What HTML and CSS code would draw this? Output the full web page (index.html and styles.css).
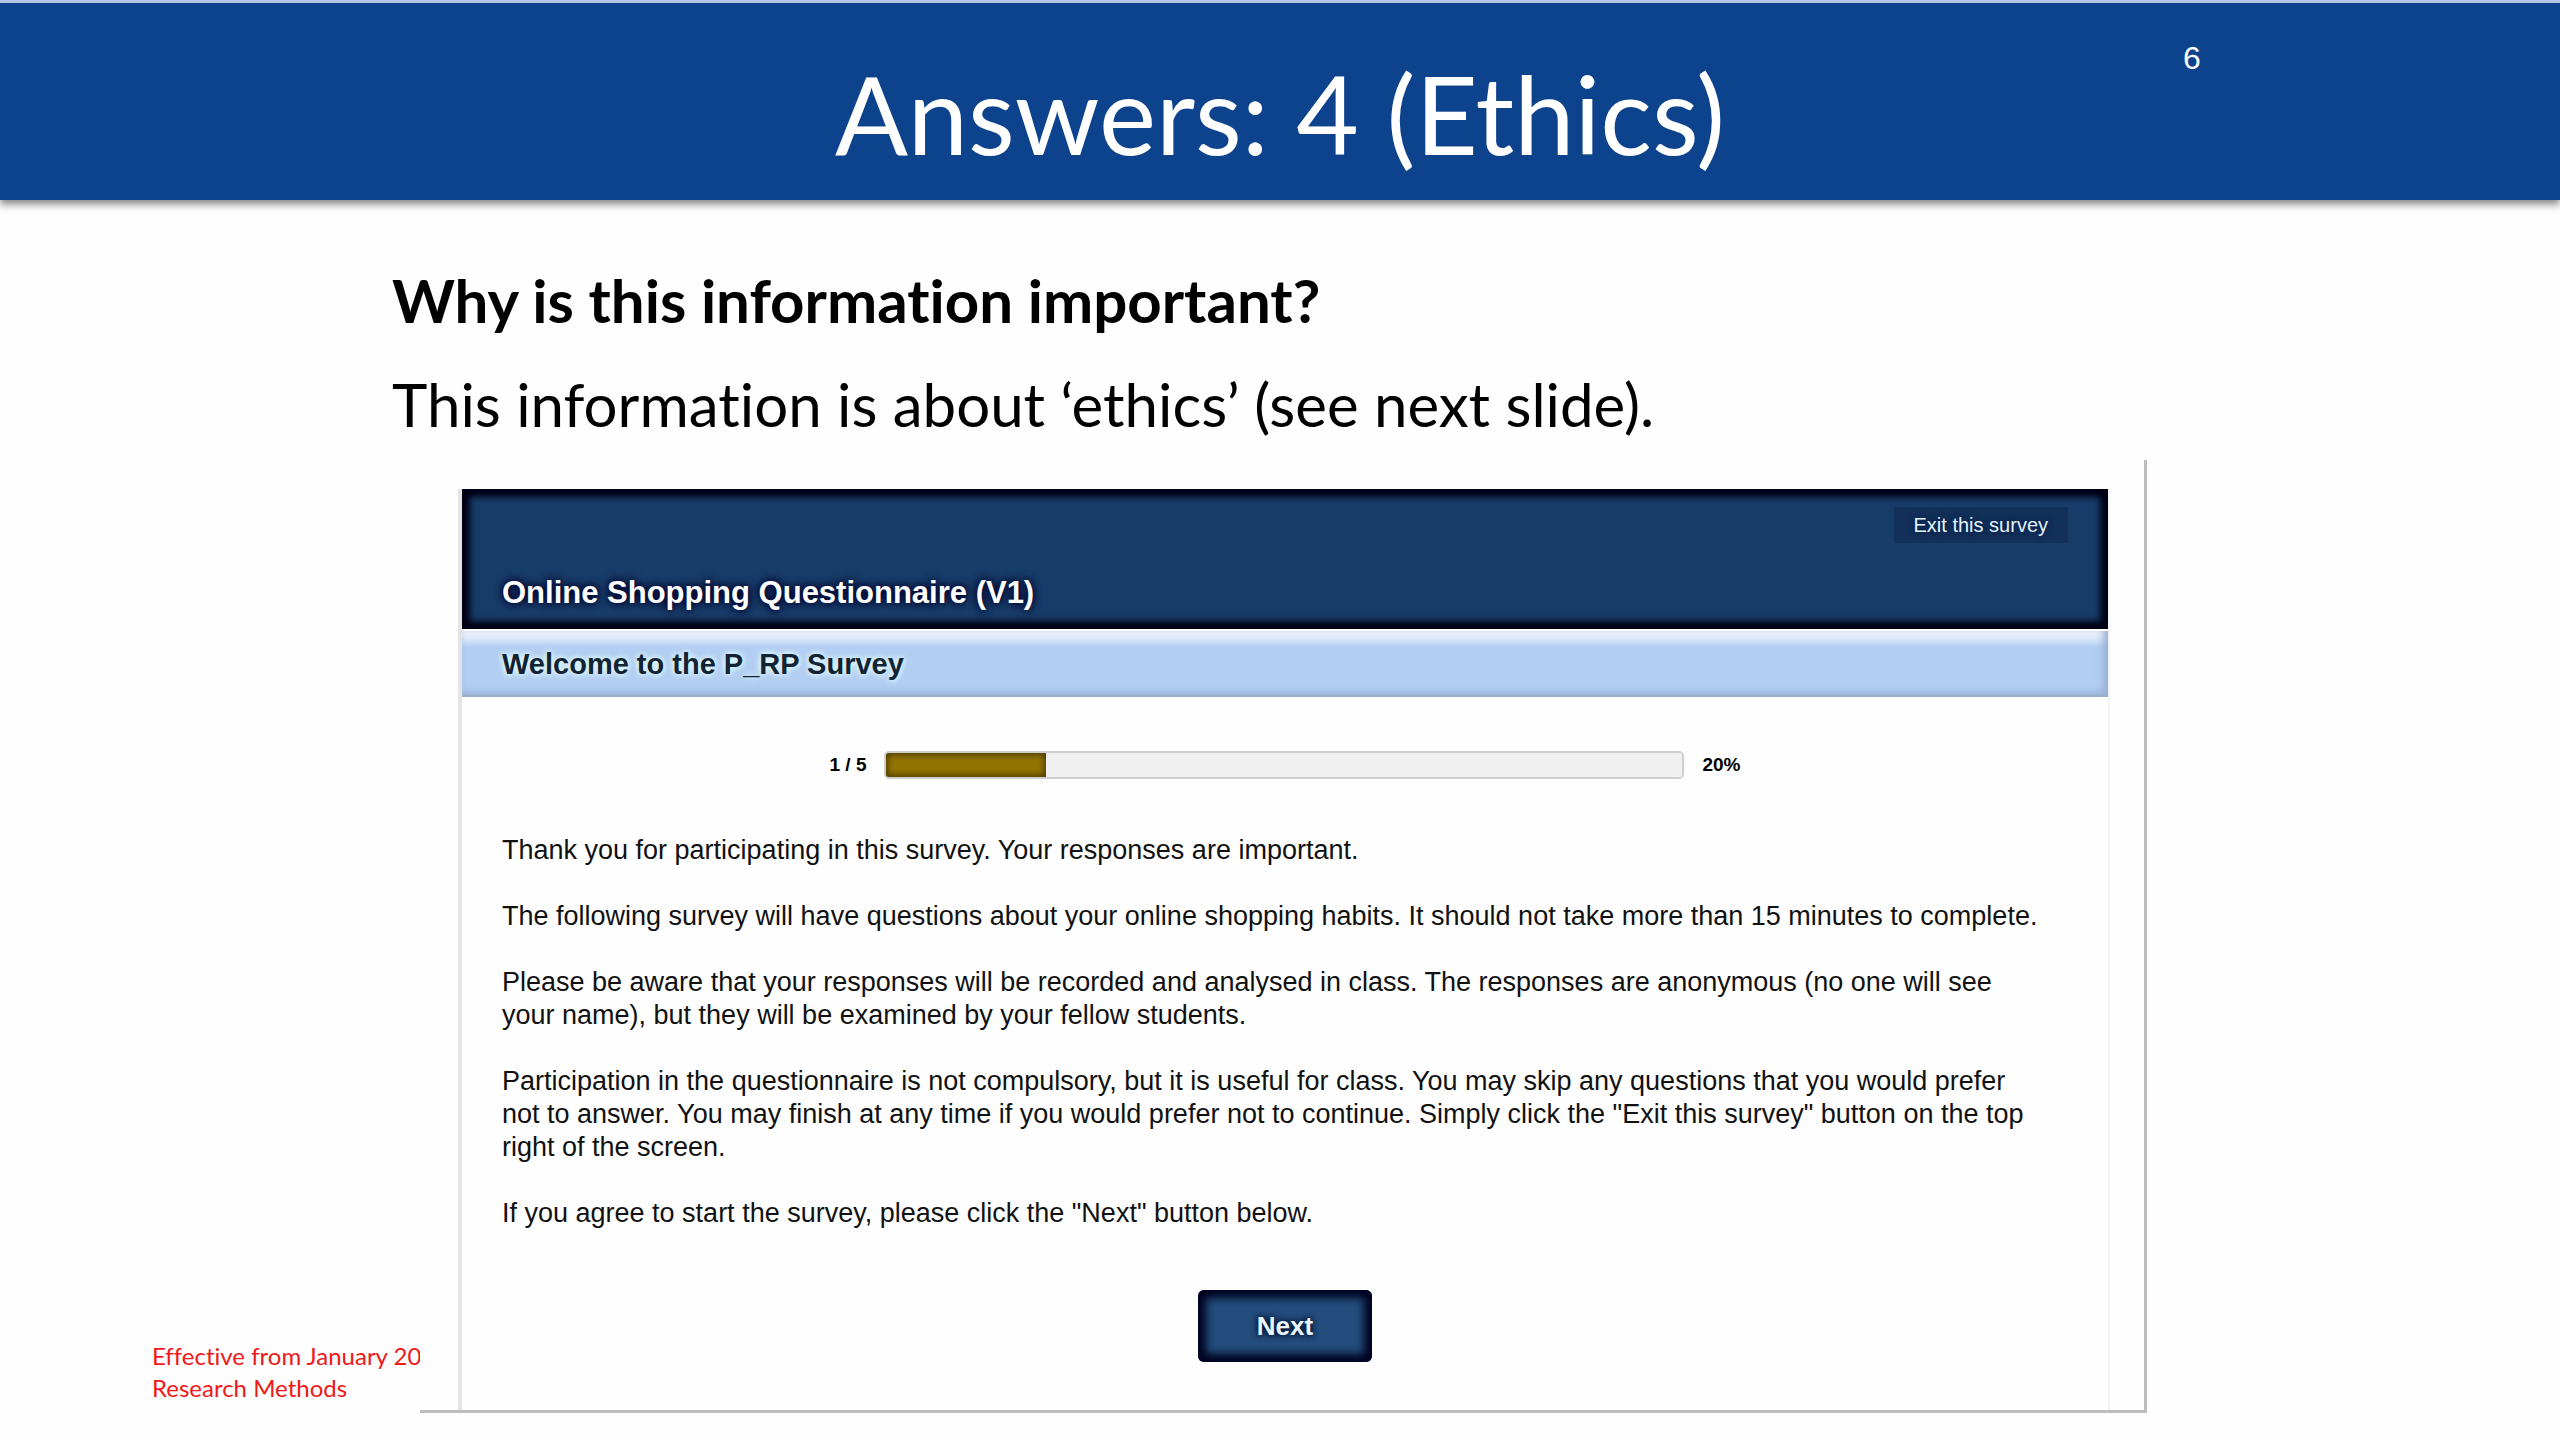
FILE: index.html
```html
<!DOCTYPE html>
<html lang="en">
<head>
  <meta charset="UTF-8">
  <meta name="viewport" content="width=device-width, initial-scale=1">
  <title>Answers: 4 (Ethics)</title>
  <link rel="stylesheet" href="styles.css">
</head>
<body>

  <header class="slide-header">
    <h1 class="slide-title">Answers: 4 (Ethics)</h1>
    <span class="slide-number">6</span>
  </header>

  <main>
    <div class="intro">
      <h2>Why is this information important?</h2>
      <p>This information is about ‘ethics’ (see next slide).</p>
    </div>

    <div class="slide-body">
      <footer class="slide-footer">
        <p>Effective from January 20</p>
        <p>Research Methods</p>
      </footer>

      <div class="survey-frame">
        <form class="survey">
          <div class="survey-header">
            <a class="exit-link" href="#">Exit this survey</a>
            <h3>Online Shopping Questionnaire (V1)</h3>
          </div>
          <h4 class="survey-welcome">Welcome to the P_RP Survey</h4>

          <div class="progress">
            <label for="survey_progress">1 / 5</label>
            <progress id="survey_progress" value="20" max="100"></progress>
            <span>20%</span>
          </div>

          <div class="survey-text">
            <p>Thank you for participating in this survey. Your responses are important.</p>
            <p>The following survey will have questions about your online shopping habits. It should not take more than 15 minutes to complete.</p>
            <p>Please be aware that your responses will be recorded and analysed in class. The responses are anonymous (no one will see your name), but they will be examined by your fellow students.</p>
            <p>Participation in the questionnaire is not compulsory, but it is useful for class. You may skip any questions that you would prefer not to answer. You may finish at any time if you would prefer not to continue. Simply click the "Exit this survey" button on the top right of the screen.</p>
            <p>If you agree to start the survey, please click the "Next" button below.</p>
          </div>

          <button class="next-button" type="button">Next</button>
        </form>
      </div>
    </div>
  </main>

</body>
</html>
```

FILE: styles.css
```css
* {
  box-sizing: border-box;
}

body {
  margin: 0;
  background-color: #fefefe;
  color: #000;
  font-family: Lato, sans-serif;
  font-variant-ligatures: none;
}

h1, h2, h3, h4, p {
  margin: 0;
}

/* blue title bar */
.slide-header {
  display: grid;
  grid-template-columns: 420fr 1720fr 420fr;
  height: 200px;
  border-top: 3px solid #b4c4e4;
  background-color: #0d438c;
  color: #fff;
  box-shadow: 0 4px 8px rgba(0, 0, 0, 0.5);
}

.slide-title {
  grid-column: 2;
  padding-top: 46px;
  font-size: 108px;
  font-weight: normal;
  line-height: 128px;
  text-align: center;
}

.slide-number {
  padding-top: 35px;
  padding-left: 43px;
  font-family: "Liberation Sans", Arial, sans-serif;
  font-size: 32px;
  line-height: 40px;
}

/* question and answer */
.intro {
  padding: 48px 392px 0;
  font-size: 60px;
  line-height: 104px;
}

.intro h2 {
  font-size: 60px;
}

/* the frame sits beside the footer note */
.slide-body {
  display: grid;
  grid-template-columns: 420fr 1727fr 413fr;
}

.slide-footer {
  align-self: end;
  overflow: hidden;
  padding-left: 152px;
  padding-bottom: 9px;
  color: #f01818;
  font-size: 24px;
  line-height: 32px;
  white-space: nowrap;
}

.survey-frame {
  margin-top: 4px;
  padding: 29px 34px 0 38px;
  border-right: 3px solid #bdbdbd;
  border-bottom: 3px solid #bdbdbd;
}

.survey {
  display: flex;
  flex-direction: column;
  padding-bottom: 48px;
  border-left: 4px solid #e4e4e4;
  border-right: 2px solid #f4f4f4;
  font-family: "Liberation Sans", Arial, sans-serif;
}

.survey-header {
  display: flex;
  flex-direction: column;
  align-items: flex-end;
  justify-content: space-between;
  height: 140px;
  padding: 18px 40px;
  background-color: #183c69;
  box-shadow: inset 0 0 6px 8px #000015;
  color: #fff;
}

.survey-header h3 {
  align-self: flex-start;
  font-size: 31px;
  line-height: 36px;
  text-shadow: 0 0 8px #00002c, 0 0 8px #00002c;
}

.exit-link {
  padding: 0 20px;
  background-color: #12305a;
  color: #e4f4ff;
  font-size: 20px;
  line-height: 36px;
  text-decoration: none;
  text-shadow: 0 0 6px #00163c;
}

.survey-welcome {
  height: 66px;
  margin-top: 2px;
  padding-left: 40px;
  border-bottom: 2px solid #9bb0cb;
  background: linear-gradient(#fff, #b2cef2 16px);
  box-shadow: inset -4px -2px 8px #91abcf;
  color: #122333;
  font-size: 29px;
  line-height: 66px;
  text-shadow: 0 0 6px #e4ffff, 0 0 6px #e4ffff;
}

.progress {
  display: flex;
  align-items: center;
  justify-content: center;
  gap: 18px;
  margin-top: 54px;
  font-size: 19px;
  font-weight: bold;
  line-height: 28px;
}

.progress progress {
  width: 800px;
  height: 28px;
  overflow: hidden;
  appearance: none;
  border: 2px solid #cfcfcf;
  border-radius: 5px;
  background-color: #f0f0f0;
}

.progress progress::-webkit-progress-bar {
  background-color: #f0f0f0;
}

.progress progress::-webkit-progress-value {
  background-color: #927500;
  box-shadow: inset 0 0 6px 2px #4f3c00;
}

/* the wider right side keeps the line ends clear of the border */
.survey-text {
  display: flex;
  flex-direction: column;
  gap: 33px;
  padding: 55px 60px 0 40px;
  color: #111;
  font-size: 27px;
  line-height: 33px;
}

.next-button {
  align-self: center;
  width: 174px;
  height: 72px;
  margin-top: 60px;
  border: 0;
  border-radius: 6px;
  background-color: #234d7c;
  box-shadow: inset 0 0 8px 8px #000320;
  color: #eaf6ff;
  font-family: inherit;
  font-size: 26px;
  font-weight: bold;
  text-shadow: 0 0 6px #001030, 0 0 6px #001030;
}
```
